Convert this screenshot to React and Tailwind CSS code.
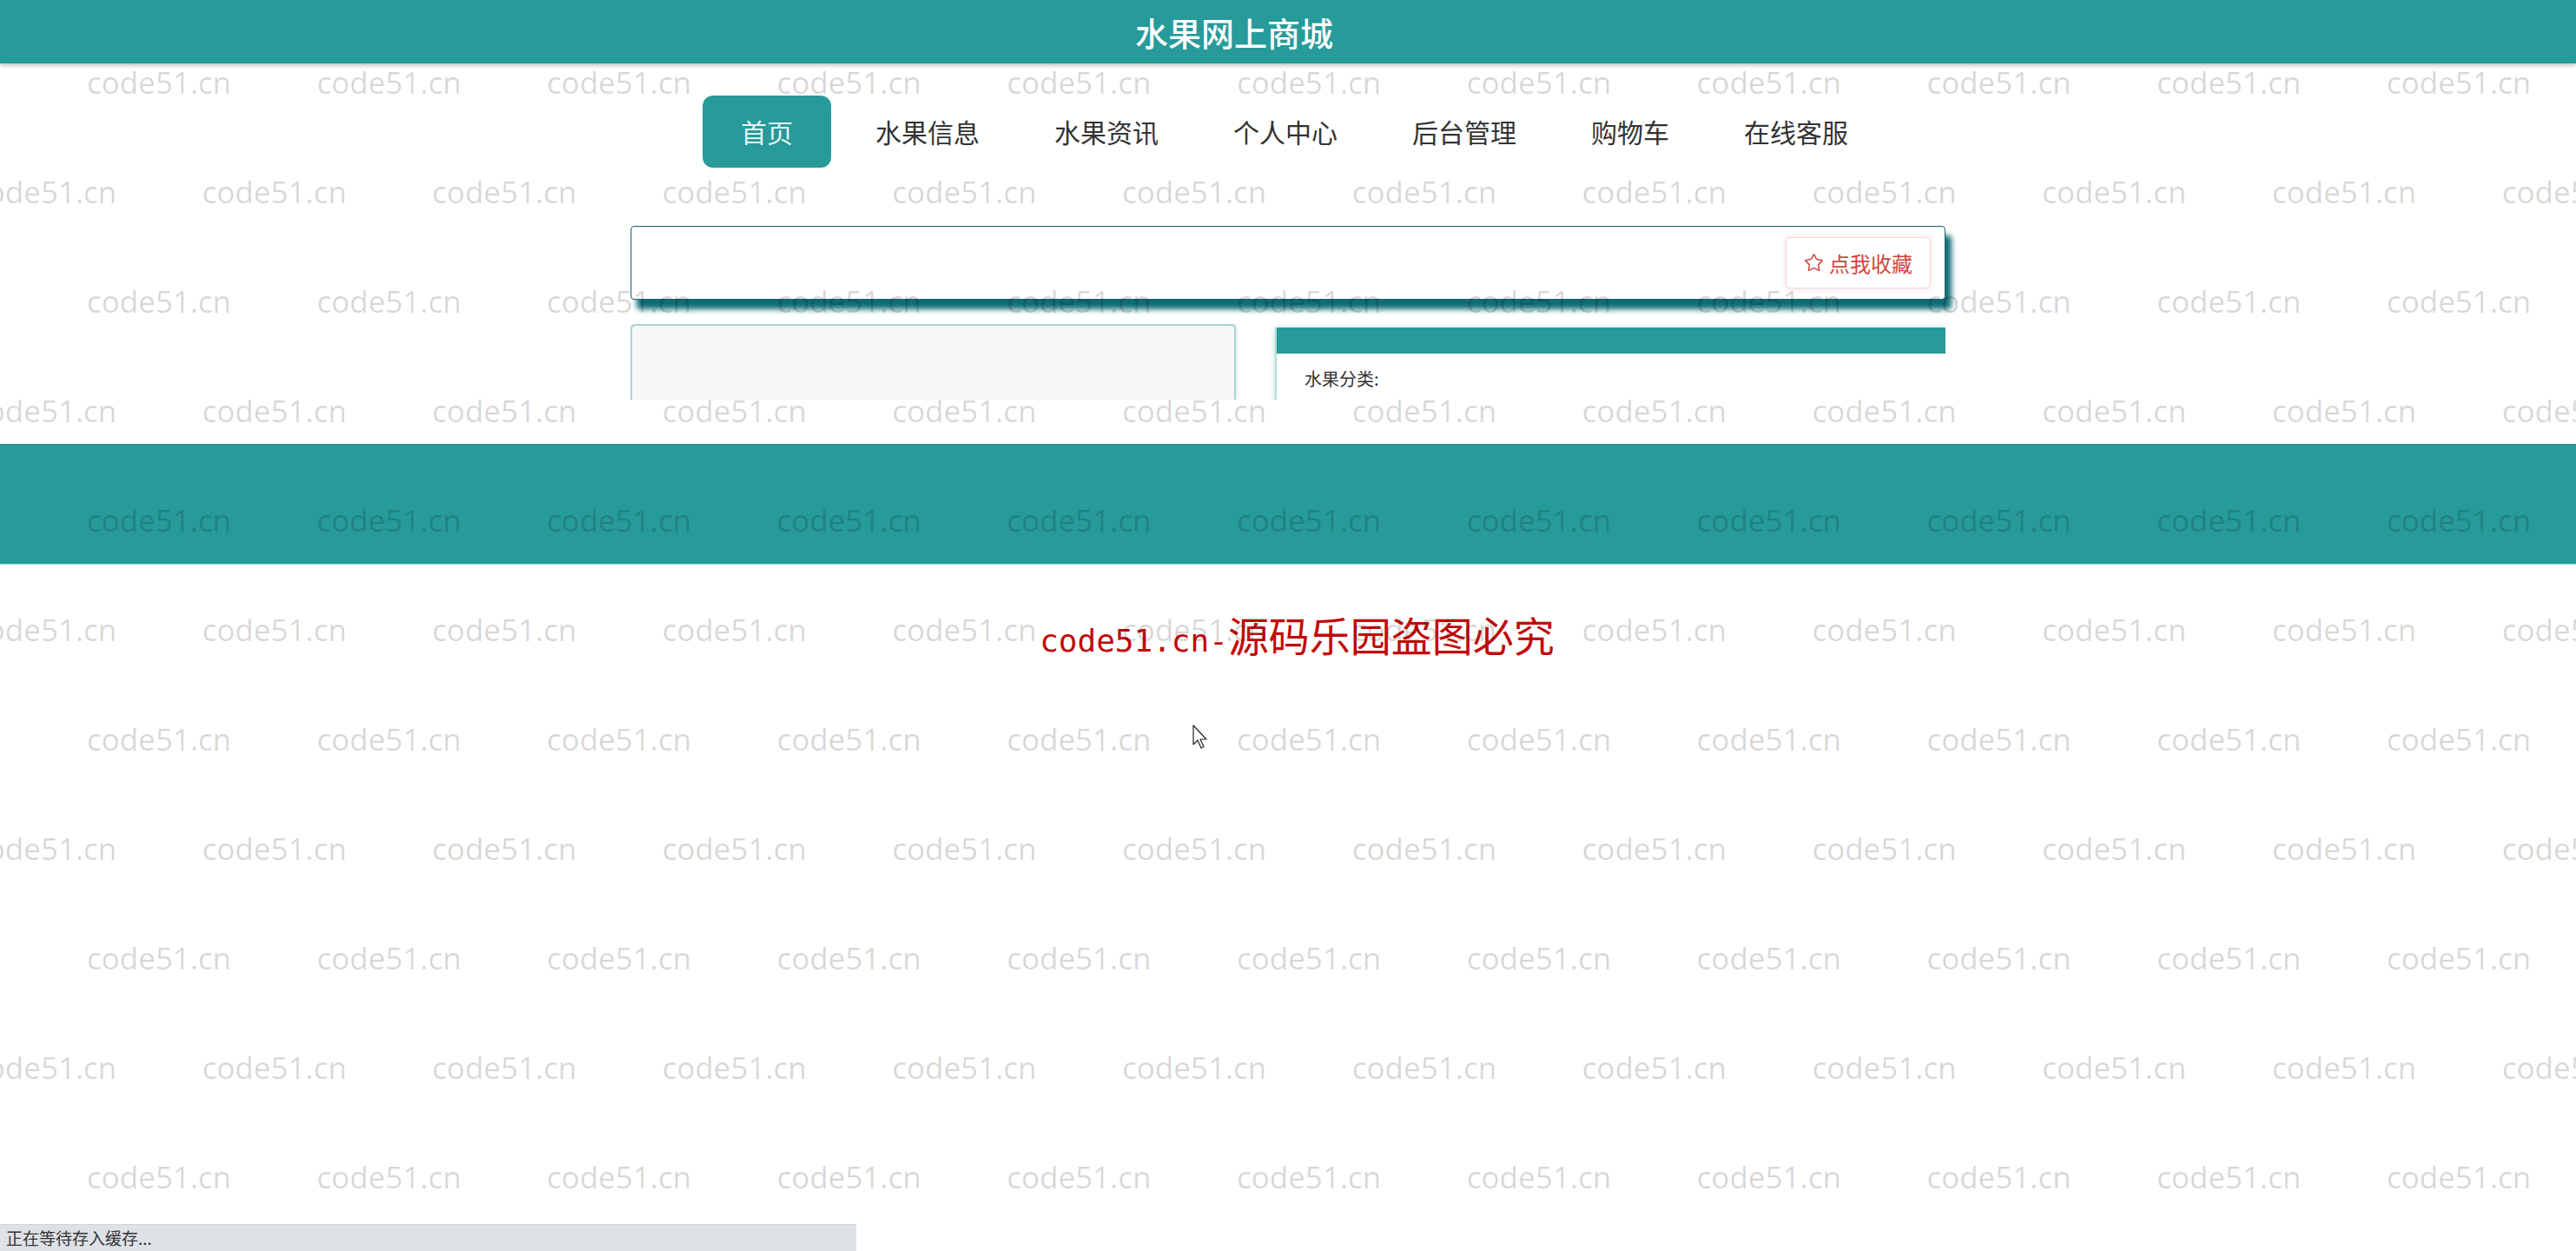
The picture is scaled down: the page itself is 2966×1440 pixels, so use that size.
import React from 'react';
import {Star} from 'lucide-react';

const navItems = ['水果信息', '水果资讯', '个人中心', '后台管理', '购物车', '在线客服'];

const Watermark = () => {
  const rows = Array.from({length: 11}, (_, i) => i);
  const cols = Array.from({length: 12}, (_, i) => i);
  return (
    <div className="pointer-events-none absolute inset-0 z-20 overflow-hidden">
      <div className="flex flex-col pt-[31px]">
        {rows.map((r) => (
          <div
            key={r}
            className={`flex h-[126px] items-center whitespace-nowrap ${r % 2 === 0 ? 'ml-[100px]' : 'ml-[-32px]'}`}
          >
            {cols.map((c) => (
              <span
                key={c}
                className="w-[264.8px] shrink-0 font-['Open_Sans',sans-serif] text-[35px] leading-none text-[rgba(0,0,0,0.16)]"
              >
                code51.cn
              </span>
            ))}
          </div>
        ))}
      </div>
    </div>
  );
};

const App = () => (
  <div className="relative min-h-screen bg-white font-['Noto_Sans_CJK_SC',sans-serif]">
    {/* header */}
    <header className="relative z-10 flex h-[73px] items-center justify-center bg-[#279a9a] shadow-[0_2px_5px_rgba(0,0,0,0.28)]">
      <h1 className="mr-[124px] text-[38px] font-medium leading-none text-white">水果网上商城</h1>
    </header>

    <div className="mx-auto w-[1514px]">
      {/* nav */}
      <nav className="mt-[37px] flex items-center pl-[83px]">
        <a className="flex h-[83px] w-[148px] items-center justify-center rounded-[12px] bg-[#279a9a] text-[30px] text-[#e8f6f6]">
          首页
        </a>
        <div className="ml-[8px] flex">
          {navItems.map((item) => (
            <a key={item} className="px-[43px] text-[30px] leading-[83px] text-[#333]">
              {item}
            </a>
          ))}
        </div>
      </nav>

      {/* favourite bar */}
      <div className="mt-[67px] flex h-[85px] items-center justify-end rounded-[4px] border border-[#1b5e66] bg-white pr-[16px] shadow-[7px_11px_6px_#0e6c74]">
        <button className="flex h-[59px] w-[167px] items-center justify-center gap-[6px] rounded-[5px] border border-[#f6d6d6] bg-white text-[24px] text-[#d1463f] shadow-[0_0_6px_rgba(240,150,150,0.35)]">
          <Star className="h-[23px] w-[23px]" strokeWidth={1.6} />
          点我收藏
        </button>
      </div>

      {/* cards */}
      <div className="mt-[28px] flex h-[87px] gap-[45px] overflow-hidden">
        <div className="h-[140px] w-[697px] shrink-0 rounded-[6px] border-2 border-[#a9d4d4] bg-[#f7f7f7] shadow-[0_-2px_4px_rgba(80,140,140,0.35)]" />
        <div className="mt-[4px] h-[140px] flex-1 border-l-2 border-[#b5dada] bg-white shadow-[0_0_6px_rgba(39,154,154,0.35)]">
          <div className="h-[30px] bg-[#279a9a]" />
          <div className="px-[32px] pt-[15px] text-[20px] leading-[28px] text-[#333]">水果分类:</div>
        </div>
      </div>
    </div>

    {/* band */}
    <div className="mt-[51px] h-[139px] border-t border-b border-t-[#2c8585] border-b-[#a8e6e6] bg-[#279a9a]" />

    <p className="mt-[51px] pl-[21px] text-center text-[47px] leading-[58px] text-[#c20808]">
      <span className="font-['DejaVu_Sans_Mono',monospace] text-[36px]">code51.cn-</span>
      <span>源码乐园盗图必究</span>
    </p>

    <Watermark />

    {/* cursor */}
    <svg className="pointer-events-none absolute left-[1373px] top-[834px] z-30" width="20" height="30" viewBox="0 0 20 30">
      <path d="M1 1 L1 23 L6 18 L10 27 L13 25.5 L9 17 L16 17 Z" fill="white" stroke="#222" strokeWidth="1.2" strokeLinejoin="round" />
    </svg>

    {/* status bar */}
    <div className="fixed bottom-0 left-0 z-30 flex h-[31px] w-[986px] items-center border-t border-[#d0d3d8] bg-[#dee1e6] pl-[7px] text-[19px] text-[#333]">
      正在等待存入缓存...
    </div>
  </div>
);

export default App;
